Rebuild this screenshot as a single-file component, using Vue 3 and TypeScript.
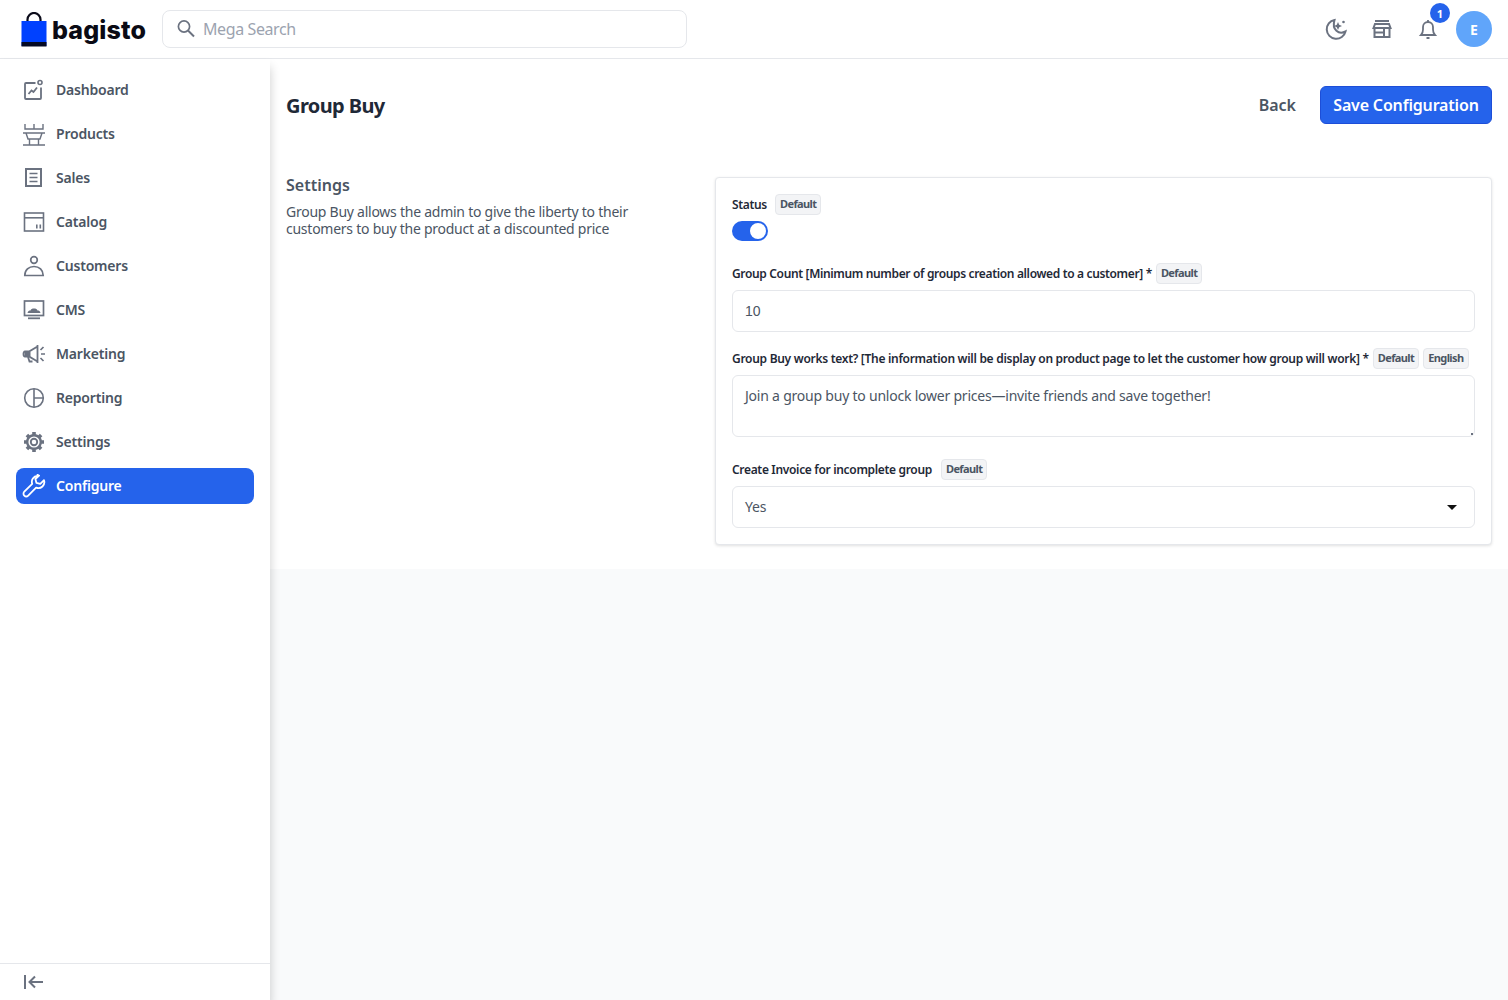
<script setup lang="ts">
interface NavItem { label: string; icon: string; active?: boolean }
const nav: NavItem[] = [
  { label: 'Dashboard', icon: 'dashboard' },
  { label: 'Products', icon: 'products' },
  { label: 'Sales', icon: 'sales' },
  { label: 'Catalog', icon: 'catalog' },
  { label: 'Customers', icon: 'customers' },
  { label: 'CMS', icon: 'cms' },
  { label: 'Marketing', icon: 'marketing' },
  { label: 'Reporting', icon: 'reporting' },
  { label: 'Settings', icon: 'settings' },
  { label: 'Configure', icon: 'configure', active: true },
]
</script>

<template>
  <div class="app">
    <header class="topbar">
      <div class="top-left">
        <div class="logo">
          <svg class="bag" width="26" height="36" viewBox="0 0 26 36">
            <path d="M6.500 13V7.500a6.500 6.500 0 0 1 13 0V13" fill="none" stroke="#0b0b1a" stroke-width="2.200" />
            <rect x="0.500" y="9" width="25" height="25" fill="#0041ff" />
            <rect x="0.500" y="30" width="25" height="4.500" fill="#060a24" />
          </svg>
          <span class="logo-text">bagisto</span>
        </div>
        <div class="search">
          <svg width="22" height="22" viewBox="0 0 22 22" fill="none" stroke="#6b7280" stroke-width="1.700">
            <circle cx="9" cy="8.500" r="5.600" />
            <path d="M13 12.500l6 6" stroke-width="2" />
          </svg>
          <span class="search-text">Mega Search</span>
        </div>
      </div>
      <div class="top-right">
        <svg width="24" height="24" viewBox="0 0 24 24" fill="none" stroke="#6b7280" stroke-width="2">
          <path d="M10.500 3A9.500 9.500 0 1 0 21.500 14.500C15 18 7.500 13 10.500 3z" />
          <path d="M14 5l1.200 2.800L18 9l-2.800 1.200L14 13l-1.200-2.800L10 9l2.800-1.200z" fill="#6b7280" stroke="none" />
          <circle cx="19.500" cy="5" r="1.300" fill="#6b7280" stroke="none" />
        </svg>
        <svg width="24" height="24" viewBox="0 0 24 24" fill="none" stroke="#6b7280" stroke-width="2">
          <path d="M5 4h14" />
          <path d="M3.500 11l1.500-4h14l1.500 4z" />
          <path d="M4.500 11v9h15v-9" />
          <path d="M5 15.500h9M14 11v9" />
        </svg>
        <div class="bell">
          <svg width="24" height="24" viewBox="0 0 24 24" fill="none" stroke="#6b7280" stroke-width="1.800">
            <path d="M5 18c1.500-1.500 2-3 2-5.500V10a5 5 0 0 1 10 0v2.500c0 2.500.5 4 2 5.500z" />
            <path d="M12 3v2" />
            <path d="M10.500 21h3" stroke-width="2" />
          </svg>
          <span class="badge-count">1</span>
        </div>
        <div class="avatar">E</div>
      </div>
    </header>

    <div class="body">
      <aside class="sidebar">
        <nav class="nav">
          <a v-for="item in nav" :key="item.label" class="nav-item" :class="{ active: item.active }">
            <svg class="nav-icon" width="24" height="24" viewBox="0 0 24 24" fill="none" stroke="currentColor" stroke-width="2">
              <template v-if="item.icon === 'dashboard'">
                <path d="M13.500 5H4a1 1 0 0 0-1 1v14a1 1 0 0 0 1 1h14a1 1 0 0 0 1-1V9.500" stroke-width="1.800" />
                <circle cx="18" cy="4.500" r="2" stroke-width="1.600" />
                <path d="M6.500 16l3-3.500 2 1.500 3.500-4.500" stroke-width="1.800" />
              </template>
              <template v-else-if="item.icon === 'products'">
                <path d="M3 2v5h18V2M12 2v5M1 11h22M4 11l2 6h12l2-6M7.500 17v6M16.500 17v6M1 23h22" stroke-width="1.400" />
              </template>
              <template v-else-if="item.icon === 'sales'">
                <rect x="4" y="3" width="15" height="17" stroke-width="2" />
                <path d="M7.500 7.500h8M7.500 11.500h8M7.500 15.500h8" stroke-width="1.600" />
              </template>
              <template v-else-if="item.icon === 'catalog'">
                <rect x="2.500" y="3" width="19" height="18" stroke-width="1.600" />
                <path d="M2.500 7.800h19" stroke-width="1.600" />
                <path d="M14 14.500h1.600v4H14zM17.500 14.500h1.600v4h-1.600z" fill="currentColor" stroke="none" />
              </template>
              <template v-else-if="item.icon === 'customers'">
                <circle cx="12" cy="6" r="3.300" stroke-width="1.700" />
                <path d="M2.800 21.500c0-5.500 4-9 9.200-9s9.200 3.500 9.200 9z" stroke-width="1.700" />
              </template>
              <template v-else-if="item.icon === 'cms'">
                <rect x="2.500" y="3" width="19" height="14.500" stroke-width="1.700" />
                <path d="M5.500 15c.5-2 1.500-2.500 3-2.500.5-1.500 1.700-2 3.500-2s3 .5 3.500 2c1.500 0 2.500.5 3 2.500z" fill="currentColor" stroke="none" />
                <path d="M6 20.300h12" stroke-width="1.800" />
              </template>
              <template v-else-if="item.icon === 'marketing'">
                <path d="M15.500 3v18M15.500 4.500L7 9.500H3c-1 0-1.500 .8-1.500 2.500s.5 2.500 1.500 2.500h4l8.500 5" stroke-width="1.800" />
                <path d="M2.500 10h6v4.500h-6z" fill="currentColor" stroke="none" />
                <path d="M6 15l1.500 4.500h3" stroke-width="1.800" />
                <path d="M18.500 8l3-3M19 12h4M18.500 16l3 3" stroke-width="1.700" />
              </template>
              <template v-else-if="item.icon === 'reporting'">
                <circle cx="12" cy="12" r="9.300" stroke-width="1.600" />
                <path d="M12 2.700v18.600M12 12h9.300" stroke-width="1.600" />
              </template>
              <template v-else-if="item.icon === 'settings'">
                <circle cx="12" cy="12" r="3.200" stroke-width="1.900" />
                <circle cx="12" cy="12" r="6.800" stroke-width="2.400" />
                <path d="M12 2v3.500M12 18.500V22M2 12h3.500M18.500 12H22M4.900 4.900l2.500 2.500M16.600 16.600l2.500 2.500M4.900 19.100l2.500-2.500M16.600 7.400l2.500-2.500" stroke-width="3.600" />
              </template>
              <template v-else>
                <path d="M15.500 1.800a6 6 0 0 0-5.300 8L2.300 17.700a2.700 2.700 0 0 0 3.900 3.900l7.900-7.900a6 6 0 0 0 7.900-7.500l-3.700 3.700-3.900-1 -1-3.900 3.700-3.300a6 6 0 0 0-1.600 -.9z" stroke-width="1.800" stroke-linejoin="round" />
              </template>
            </svg>
            <span>{{ item.label }}</span>
          </a>
        </nav>
        <div class="collapse">
          <svg width="24" height="24" viewBox="0 0 24 24" fill="none" stroke="#6b7280" stroke-width="2">
            <path d="M2 5v14" />
            <path d="M20 12H7M12 6.500L6.500 12l5.500 5.500" />
          </svg>
        </div>
      </aside>

      <main class="main">
        <section class="panel">
          <div class="title-row">
            <h1 class="title">Group Buy</h1>
            <div class="actions">
              <a class="back">Back</a>
              <button class="save">Save Configuration</button>
            </div>
          </div>

          <div class="columns">
            <div class="intro">
              <h2 class="intro-title">Settings</h2>
              <p class="intro-text">Group Buy allows the admin to give the liberty to their customers to buy the product at a discounted price</p>
            </div>

            <div class="card">
              <div class="label-row status-row">
                <label class="label">Status</label>
                <span class="chip">Default</span>
              </div>
              <div class="toggle"><span class="knob"></span></div>

              <div class="label-row tight">
                <label class="label label-count">Group Count [Minimum number of groups creation allowed to a customer] *</label>
                <span class="chip">Default</span>
              </div>
              <div class="field input-num">10</div>

              <div class="label-row tight">
                <label class="label label-works">Group Buy works text? [The information will be display on product page to let the customer how group will work] *</label>
                <span class="chip">Default</span>
                <span class="chip">English</span>
              </div>
              <div class="field area">
                Join a group buy to unlock lower prices—invite friends and save together!
                <span class="grip"></span>
              </div>

              <div class="label-row invoice">
                <label class="label">Create Invoice for incomplete group</label>
                <span class="chip">Default</span>
              </div>
              <div class="field select">
                <span>Yes</span>
                <span class="caret"></span>
              </div>
            </div>
          </div>
        </section>
      </main>
    </div>
  </div>
</template>

<style>
html, body { margin: 0; padding: 0; background: #fff; }
</style>

<style scoped>
.app {
  width: 100%;
  height: 1000px;
  overflow: hidden;
  display: flex;
  flex-direction: column;
  font-family: "Noto Sans", "Open Sans", sans-serif;
  color: #1f2937;
}
.topbar {
  height: 58px;
  flex: none;
  box-sizing: content-box;
  border-bottom: 1px solid #e5e7eb;
  display: flex;
  align-items: center;
  justify-content: space-between;
  padding: 0 16px 0 21px;
  background: #fff;
}
.top-left { display: flex; align-items: center; }
.logo { display: flex; align-items: center; width: 141px; height: 36px; }
.bag { flex: none; margin-top: 1px; }
.logo-text {
  font-family: "Inter", sans-serif;
  font-weight: 800;
  font-size: 25px;
  letter-spacing: 0.15px;
  color: #0a0a14;
  margin-left: 5px;
  margin-top: 2px;
}
.search {
  width: 525px;
  height: 38px;
  box-sizing: border-box;
  border: 1px solid #e5e7eb;
  border-radius: 8px;
  display: flex;
  align-items: center;
  padding: 0 12px;
  gap: 6px;
  margin-top: -1px;
}
.search-text { font-size: 16px; letter-spacing: -0.4px; color: #9ca3af; }
.top-right { display: flex; align-items: center; gap: 22px; }
.bell { position: relative; width: 24px; height: 24px; }
.badge-count {
  position: absolute;
  top: -14px;
  left: 14px;
  width: 20px;
  height: 20px;
  border-radius: 50%;
  background: #2563eb;
  color: #fff;
  font-size: 11px;
  font-weight: 700;
  display: flex;
  align-items: center;
  justify-content: center;
}
.avatar {
  width: 36px;
  height: 36px;
  margin-left: -6px;
  border-radius: 50%;
  background: #60a5fa;
  color: #fff;
  font-size: 14px;
  font-weight: 700;
  display: flex;
  align-items: center;
  justify-content: center;
}
.body { flex: 1; display: flex; min-height: 0; }
.sidebar {
  width: 270px;
  flex: none;
  display: flex;
  flex-direction: column;
  justify-content: space-between;
  background: #fff;
  box-shadow: 0 8px 10px 0 rgba(0, 0, 0, 0.2);
  position: relative;
  z-index: 1;
}
.nav { display: flex; flex-direction: column; gap: 8px; padding: 13px 16px 0; }
.nav-item {
  height: 36px;
  display: flex;
  align-items: center;
  gap: 10px;
  padding: 0 6px;
  border-radius: 8px;
  font-size: 14px;
  font-weight: 600;
  letter-spacing: -0.2px;
  color: #4b5563;
}
.nav-item span { padding-bottom: 2px; }
.nav-icon { color: #6b7280; flex: none; }
.nav-item.active { background: #2563eb; color: #fff; }
.nav-item.active .nav-icon { color: #fff; }
.collapse {
  height: 36px;
  border-top: 1px solid #e5e7eb;
  display: flex;
  align-items: center;
  padding-left: 23px;
}
.main { flex: 1; background: #f9fafb; min-width: 0; }
.panel { background: #fff; padding: 27px 16px 24px; height: 510px; box-sizing: border-box; }
.title-row { display: flex; align-items: center; justify-content: space-between; height: 38px; }
.title { margin: 0; font-size: 20px; font-weight: 700; letter-spacing: -0.6px; color: #1f2937; }
.actions { display: flex; align-items: center; gap: 24px; }
.back { font-size: 16px; font-weight: 600; color: #4b5563; }
.save {
  width: 172px;
  height: 38px;
  box-sizing: border-box;
  background: #2563eb;
  border: 1px solid #1d4ed8;
  border-radius: 6px;
  color: #fff;
  font-family: inherit;
  font-size: 16px;
  font-weight: 600;
  letter-spacing: -0.17px;
  padding: 0;
}
.columns { display: flex; margin-top: 53px; }
.intro { width: 429px; flex: none; }
.intro-title { margin: 0; font-size: 16px; line-height: 17px; font-weight: 600; color: #4b5563; }
.intro-text { margin: 9px 0 0; font-size: 14px; line-height: 17px; letter-spacing: -0.25px; color: #4b5563; width: 360px; }
.card {
  flex: 1;
  min-width: 0;
  height: 368px;
  box-sizing: border-box;
  background: #fff;
  border: 1px solid #e5e7eb;
  border-radius: 4px;
  box-shadow: 0 1px 3px rgba(0, 0, 0, 0.12);
  padding: 16px;
}
.label-row { display: flex; align-items: center; gap: 4px; height: 21px; }
.status-row { gap: 8px; }
.tight { margin-top: 6px; }
.invoice { gap: 9px; margin-top: 22px; }
.label { font-size: 12px; font-weight: 600; letter-spacing: -0.33px; color: #1f2937; white-space: nowrap; }
.label-count { letter-spacing: -0.35px; }
.label-works { letter-spacing: -0.29px; }
.chip {
  height: 21px;
  box-sizing: border-box;
  padding: 0 4px 2px;
  display: inline-flex;
  align-items: center;
  background: #f3f4f6;
  border: 1px solid #e5e7eb;
  border-radius: 4px;
  font-size: 11px;
  font-weight: 700;
  letter-spacing: -0.6px;
  color: #4b5563;
}
.toggle {
  margin-top: 6px;
  margin-bottom: 22px;
  width: 36px;
  height: 20px;
  border-radius: 10px;
  background: #2563eb;
  position: relative;
}
.knob {
  position: absolute;
  top: 2px;
  right: 2px;
  width: 16px;
  height: 16px;
  border-radius: 50%;
  background: #fff;
}
.field {
  box-sizing: border-box;
  border: 1px solid #e5e7eb;
  border-radius: 6px;
  padding: 0 12px;
  font-size: 14px;
  letter-spacing: -0.22px;
  color: #4b5563;
  display: flex;
  align-items: center;
  margin-top: 6px;
  height: 42px;
}
.input-num { font-family: "Liberation Sans", sans-serif; letter-spacing: 0; margin-bottom: 16px; }
.area { height: 62px; align-items: flex-start; padding-top: 10px; position: relative; }
.grip {
  position: absolute;
  right: 1px;
  bottom: 1px;
  width: 2px;
  height: 2px;
  background: #6b7280;
}
.select { justify-content: space-between; margin-top: 6px; padding-right: 17px; }
.select span:first-child { padding-bottom: 2px; }
.caret {
  width: 0;
  height: 0;
  border-left: 5px solid transparent;
  border-right: 5px solid transparent;
  border-top: 5px solid #111;
}
</style>
